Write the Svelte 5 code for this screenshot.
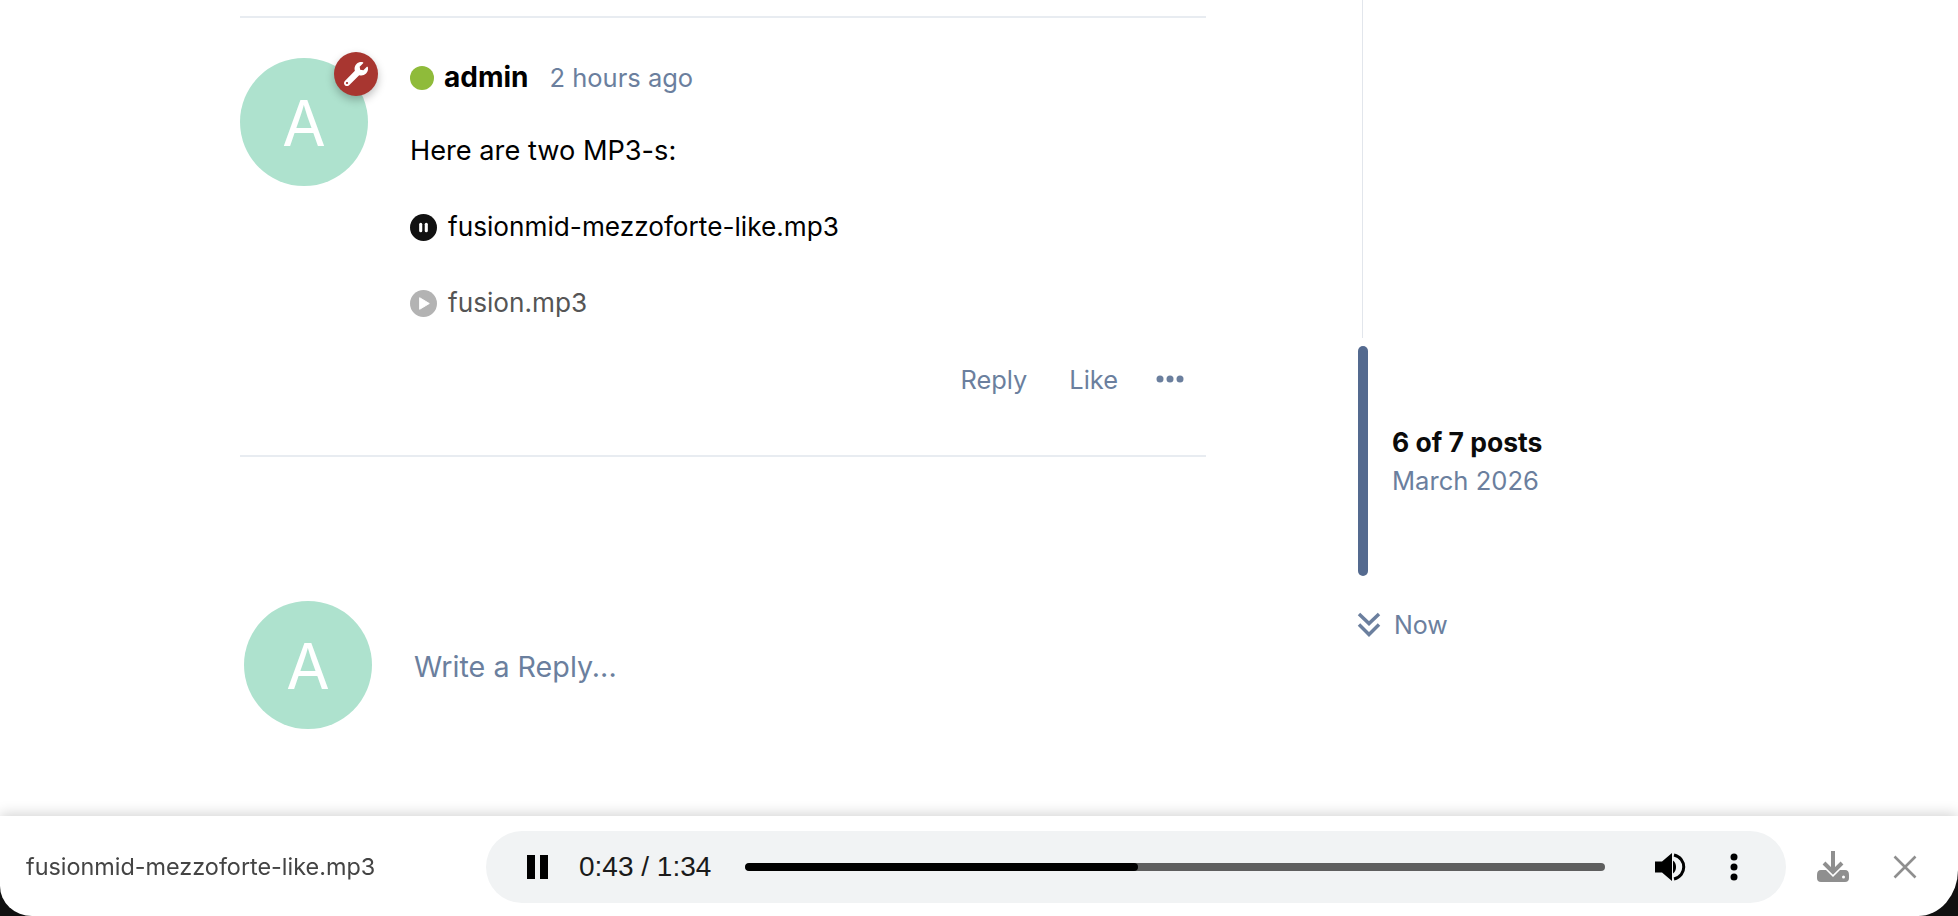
<script lang="ts">
	const progress = 45.7;
</script>

<div class="page">
	<main class="stream">
		<article class="post">
			<div class="avatar-wrap">
				<div class="avatar">A</div>
				<span class="badge">
					<svg viewBox="0 0 512 512" width="24" height="24">
						<path
							fill="#fff"
							d="M507.7 109.100c-2.200-9-13.400-12-19.900-5.500l-74.400 74.400-67.900-11.300-11.300-67.900 74.400-74.400c6.600-6.600 3.400-17.800-5.700-20-47.300-11.400-99.200 1.200-136.100 38.100-39.500 39.500-50.900 96.400-34.500 146.200L18.700 404.800c-25 25-25 65.500 0 90.500s65.500 25 90.500 0l215-215c49.900 16.600 106.800 5.100 146.400-34.500 36.900-36.900 49.500-89 37.100-136.700zM64 472c-13.300 0-24-10.700-24-24s10.700-24 24-24 24 10.700 24 24-10.700 24-24 24z"
						/>
					</svg>
				</span>
			</div>
			<div class="post-main">
				<header class="post-head">
					<span class="online"></span>
					<strong class="author">admin</strong>
					<span class="time">2 hours ago</span>
				</header>
				<div class="body">
					<p class="lead">Here are two MP3-s:</p>
					<p class="track">
						<svg viewBox="0 0 28 28" width="27" height="27">
							<circle cx="14" cy="14" r="14" fill="#111" />
							<rect x="9.500" y="9" width="3.200" height="10" rx="1.600" fill="#fff" />
							<rect x="15.300" y="9" width="3.200" height="10" rx="1.600" fill="#fff" />
						</svg>
						fusionmid-mezzoforte-like.mp3
					</p>
					<p class="track idle">
						<svg viewBox="0 0 28 28" width="27" height="27">
							<circle cx="14" cy="14" r="14" fill="#b3b3b3" />
							<path d="M10 8 L20 14 L10 20 Z" fill="#fff" stroke="#fff" stroke-width="1" stroke-linejoin="round" />
						</svg>
						fusion.mp3
					</p>
				</div>
				<footer class="actions">
					<span>Reply</span>
					<span>Like</span>
					<svg viewBox="0 0 28 8" width="28" height="8">
						<circle cx="4" cy="4" r="3.500" />
						<circle cx="14" cy="4" r="3.500" />
						<circle cx="24" cy="4" r="3.500" />
					</svg>
				</footer>
			</div>
		</article>

		<section class="composer">
			<div class="avatar">A</div>
			<span class="write">Write a Reply...</span>
		</section>
	</main>

	<aside class="scrubber">
		<div class="track-line"></div>
		<div class="handle">
			<div class="bar"></div>
			<div class="handle-text">
				<strong>6 of 7 posts</strong>
				<span>March 2026</span>
			</div>
		</div>
		<div class="now">
			<svg viewBox="0 0 26 26" width="26" height="26" fill="none" stroke="#6b7f9e" stroke-width="3.500">
				<path d="M3 2 L13 11.500 L23 2" />
				<path d="M3 12.500 L13 22.500 L23 12.500" />
			</svg>
			<span>Now</span>
		</div>
	</aside>
</div>

<div class="dock">
	<div class="player">
		<span class="file">fusionmid-mezzoforte-like.mp3</span>
		<div class="audio">
			<svg class="pause" viewBox="0 0 24 26" width="24" height="26">
				<rect x="0" y="1" width="8" height="24" />
				<rect x="13" y="1" width="8" height="24" />
			</svg>
			<span class="clock">0:43 / 1:34</span>
			<div class="seek">
				<div class="seek-fill" style="width: {progress}%"></div>
			</div>
			<svg class="volume" viewBox="0 0 32 32" width="32" height="32">
				<path d="M1 10.500 H8 L18 2 V30 L8 21.500 H1 Z" />
				<path d="M19 9.500 C23 12 23 20 19 22.500 Z" />
				<path d="M20 4 C33 7 33 25 20 28" fill="none" stroke="#000" stroke-width="3" />
			</svg>
			<svg class="more" viewBox="0 0 8 28" width="8" height="28">
				<circle cx="4" cy="4" r="3.500" />
				<circle cx="4" cy="14" r="3.500" />
				<circle cx="4" cy="24" r="3.500" />
			</svg>
		</div>
		<svg class="download" viewBox="0 0 34 32" width="34" height="32">
			<path d="M17 0 V20 M8 12 L17 21 L26 12" fill="none" stroke="#8f8f8f" stroke-width="4" />
			<path d="M5 19 H10 L17 26 L24 19 H29 Q33 19 33 24 V27 Q33 31 29 31 H5 Q1 31 1 27 V24 Q1 19 5 19 Z" fill="#8f8f8f" />
			<circle cx="27.500" cy="26" r="1.500" fill="#fff" />
		</svg>
		<svg class="close" viewBox="0 0 24 24" width="24" height="24">
			<path d="M1.500 1.500 L22.500 22.500 M22.500 1.500 L1.500 22.500" stroke="#8f8f8f" stroke-width="2.600" fill="none" />
		</svg>
	</div>
</div>

<style>
	:global(body) {
		margin: 0;
		background: #fff;
		font-family: Inter, 'Liberation Sans', sans-serif;
		color: #000;
		height: 916px;
		overflow: hidden;
	}

	.page {
		display: flex;
		height: 916px;
		background: #fff;
	}

	.stream {
		width: 966px;
		margin-left: 240px;
		padding-top: 16px;
	}

	.post {
		display: flex;
		gap: 42px;
		border-top: 2px solid #e8ecf1;
		border-bottom: 2px solid #e8ecf1;
		padding-top: 40px;
		box-sizing: border-box;
		height: 441px;
	}

	.avatar-wrap {
		position: relative;
		flex: none;
		width: 128px;
		height: 128px;
	}

	.avatar {
		flex: none;
		width: 128px;
		height: 128px;
		border-radius: 50%;
		background: #aee2ce;
		color: #fff;
		font-size: 63px;
		font-weight: 400;
		line-height: 130px;
		text-align: center;
	}

	.badge {
		position: absolute;
		top: -6px;
		right: -10px;
		width: 44px;
		height: 44px;
		border-radius: 50%;
		background: #a83630;
		box-shadow: 0 4px 8px rgba(0, 0, 0, 0.25);
		display: flex;
		align-items: center;
		justify-content: center;
	}

	.post-main {
		flex: 1;
		padding-right: 22px;
	}

	.post-head {
		display: flex;
		align-items: center;
		height: 40px;
	}

	.online {
		width: 24px;
		height: 24px;
		border-radius: 50%;
		background: #8fbb3a;
		margin-right: 10px;
	}

	.author {
		font-size: 28px;
		font-weight: 700;
		margin-right: 21px;
		position: relative;
		top: -1px;
	}

	.time {
		font-size: 25.500px;
		color: #6b7f9e;
		position: relative;
		top: -1px;
	}

	.body {
		font-size: 26.200px;
		line-height: 36px;
		padding-top: 35px;
	}

	.body p {
		margin: 0 0 40px;
		height: 36px;
	}

	.body p.lead {
		font-size: 27.200px;
	}

	.body p.track {
		display: flex;
		align-items: center;
		gap: 11px;
	}

	.track.idle {
		color: #555;
	}

	.actions {
		display: flex;
		justify-content: flex-end;
		align-items: center;
		gap: 42px;
		font-size: 25.400px;
		color: #6b7f9e;
		height: 36px;
	}

	.actions svg {
		fill: #6b7f9e;
		margin-left: -4px;
	}

	.composer {
		display: flex;
		align-items: center;
		gap: 42px;
		margin-top: 144px;
		margin-left: 4px;
	}

	.write {
		font-size: 28.700px;
		color: #6b7f9e;
		padding-top: 2px;
	}

	.scrubber {
		margin-left: 151px;
		display: flex;
		flex-direction: column;
		width: 300px;
	}

	.track-line {
		width: 1px;
		height: 338px;
		margin-left: 5px;
		background: #e2e6ec;
	}

	.handle {
		display: flex;
		margin-top: 8px;
		height: 230px;
		gap: 24px;
		align-items: center;
	}

	.bar {
		width: 10px;
		height: 230px;
		border-radius: 5px;
		background: #546a8f;
		margin-left: 1px;
	}

	.handle-text {
		display: flex;
		flex-direction: column;
		gap: 7px;
		font-size: 25.600px;
		color: #6b7f9e;
	}

	.handle-text strong {
		color: #0b0b0b;
		font-size: 26.500px;
		font-weight: 700;
	}

	.now {
		display: flex;
		align-items: center;
		gap: 12px;
		margin-top: 34px;
		margin-left: -1px;
		font-size: 25px;
		color: #6b7f9e;
	}

	.dock {
		position: fixed;
		left: 0;
		right: 0;
		bottom: 0;
		height: 100px;
		background: linear-gradient(to bottom, transparent 50%, #111 50%);
	}

	.player {
		height: 100px;
		display: flex;
		align-items: center;
		background: #fff;
		border-radius: 0 0 40px 32px / 0 0 46px 30px;
		box-shadow: 0 -2px 14px rgba(0, 0, 0, 0.18);
		padding: 2px 0 0 26px;
		box-sizing: border-box;
	}

	.file {
		width: 460px;
		font-size: 23.400px;
		color: #444;
		flex: none;
		position: relative;
		top: -1px;
	}

	.audio {
		flex: none;
		width: 1300px;
		height: 72px;
		border-radius: 36px;
		background: #f1f3f4;
		display: flex;
		align-items: center;
		box-sizing: border-box;
		padding-left: 40px;
	}

	.pause {
		margin-left: 1px;
		flex: none;
	}

	.clock {
		font-family: 'Liberation Sans', Arial, sans-serif;
		font-size: 28px;
		color: #1a1a1a;
		margin-left: 28px;
		width: 133px;
		flex: none;
	}

	.seek {
		margin-left: 33px;
		width: 860px;
		height: 8px;
		border-radius: 4px;
		background: #5e5e5e;
		overflow: hidden;
		flex: none;
	}

	.seek-fill {
		height: 100%;
		background: #000;
		border-radius: 4px;
	}

	.volume {
		margin-left: 49px;
		flex: none;
	}

	.more {
		margin-left: 44px;
		flex: none;
	}

	.download {
		margin-left: 30px;
		flex: none;
	}

	.close {
		margin-left: 43px;
		flex: none;
	}
</style>
